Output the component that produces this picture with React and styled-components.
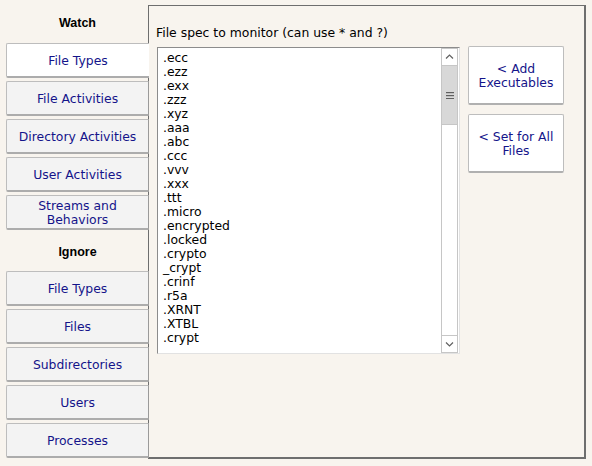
import styled, { createGlobalStyle } from "styled-components";

const GlobalStyle = createGlobalStyle`
  body {
    margin: 0;
    background: #f8f4ee;
    font-family: "DejaVu Sans", Verdana, sans-serif;
    font-size: 12.4px;
  }
`;

const Window = styled.div`
  display: flex;
  width: 592px;
  height: 466px;
  background: #f8f4ee;
`;

const Sidebar = styled.div`
  display: flex;
  flex-direction: column;
  width: 143px;
  margin-left: 6px;
  margin-right: -1px;
  position: relative;
  z-index: 1;
`;

const GroupTitle = styled.div`
  height: ${(props) => props.h}px;
  display: flex;
  align-items: center;
  justify-content: center;
  font-family: "Liberation Sans", Arial, sans-serif;
  font-weight: bold;
  font-size: 12.5px;
  color: #000;
  padding-top: ${(props) => props.pt || 0}px;
  box-sizing: border-box;
`;

const Tab = styled.div`
  box-sizing: border-box;
  height: 35px;
  margin-bottom: 3px;
  padding-top: 1px;
  display: flex;
  align-items: center;
  justify-content: center;
  text-align: center;
  line-height: 14px;
  color: #14148a;
  background: ${(props) => (props.active ? "#ffffff" : "#f3f3f3")};
  border: 1px solid #bdbdbd;
  border-bottom: 2px solid #acacac;
  border-right: ${(props) => (props.active ? "none" : "1px solid #9a9a9a")};
  border-radius: 2px 0 0 2px;
  cursor: pointer;
`;

const Panel = styled.div`
  box-sizing: border-box;
  margin-top: 5px;
  width: 438px;
  height: 454px;
  border: 1px solid #6e6e6e;
  border-right-width: 2px;
  border-bottom-width: 2px;
  padding: 19px 0 0 7px;
  display: flex;
  flex-direction: column;
`;

const Label = styled.div`
  color: #000;
  height: 15px;
  line-height: 15px;
  margin-bottom: 7px;
`;

const Row = styled.div`
  display: flex;
  gap: 8px;
`;

const ListBox = styled.div`
  box-sizing: border-box;
  width: 303px;
  height: 307px;
  margin-left: 1px;
  background: #fff;
  border: 1px solid #8c8c8c;
  border-right-color: #e2e2e2;
  border-bottom-color: #e2e2e2;
  display: flex;
`;

const Items = styled.div`
  flex: 1;
  padding: 3px 0 0 5px;
  color: #000;
  line-height: 14px;
`;

const Scroll = styled.div`
  box-sizing: border-box;
  width: 17px;
  margin: 0 1px 0 0;
  border: 1px solid #c6c6c6;
  display: flex;
  flex-direction: column;
  background: #fff;
`;

const Arrow = styled.div`
  height: 16px;
  display: flex;
  align-items: center;
  justify-content: center;
  border-bottom: ${(props) => (props.down ? "none" : "1px solid #c6c6c6")};
  border-top: ${(props) => (props.down ? "1px solid #c6c6c6" : "none")};
`;

const Thumb = styled.div`
  height: 58px;
  background: #d8d8d8;
  border-bottom: 1px solid #c6c6c6;
  display: flex;
  align-items: center;
  justify-content: center;
`;

const Track = styled.div`
  flex: 1;
`;

const Buttons = styled.div`
  display: flex;
  flex-direction: column;
  gap: 9px;
  margin-top: -1px;
`;

const Button = styled.div`
  box-sizing: border-box;
  width: 96px;
  height: 59px;
  background: #fff;
  border: 1px solid #bdbdbd;
  border-bottom: 2px solid #b0b0b0;
  border-radius: 2px;
  display: flex;
  align-items: center;
  justify-content: center;
  text-align: center;
  line-height: 14px;
  color: #14148a;
  padding: 2px 4px 0;
`;

const Chevron = ({ down }) => (
  <svg width="9" height="6" viewBox="0 0 9 6">
    <path
      d={down ? "M1 1.5 L4.5 5 L8 1.5" : "M1 4.5 L4.5 1 L8 4.5"}
      fill="none"
      stroke="#606060"
      strokeWidth="1.2"
    />
  </svg>
);

const Grip = () => (
  <svg width="8" height="7" viewBox="0 0 8 7">
    <rect x="0" y="0" width="8" height="1.2" fill="#606060" />
    <rect x="0" y="3" width="8" height="1.2" fill="#606060" />
    <rect x="0" y="6" width="8" height="1.2" fill="#606060" />
  </svg>
);

const watchTabs = [
  "File Types",
  "File Activities",
  "Directory Activities",
  "User Activities",
  "Streams and Behaviors",
];
const ignoreTabs = ["File Types", "Files", "Subdirectories", "Users", "Processes"];

const specs = [
  ".ecc", ".ezz", ".exx", ".zzz", ".xyz", ".aaa", ".abc", ".ccc", ".vvv",
  ".xxx", ".ttt", ".micro", ".encrypted", ".locked", ".crypto", "_crypt",
  ".crinf", ".r5a", ".XRNT", ".XTBL", ".crypt",
];

export default function App() {
  return (
    <>
      <GlobalStyle />
      <Window>
        <Sidebar>
          <GroupTitle h={43} pt={2}>Watch</GroupTitle>
          {watchTabs.map((t, i) => (
            <Tab key={t} active={i === 0}>
              {t === "Streams and Behaviors" ? (
                <span>
                  Streams and
                  <br />
                  Behaviors
                </span>
              ) : (
                t
              )}
            </Tab>
          ))}
          <GroupTitle h={38}>Ignore</GroupTitle>
          {ignoreTabs.map((t) => (
            <Tab key={t}>{t}</Tab>
          ))}
        </Sidebar>
        <Panel>
          <Label>File spec to monitor (can use * and ?)</Label>
          <Row>
            <ListBox>
              <Items>
                {specs.map((s) => (
                  <div key={s}>{s}</div>
                ))}
              </Items>
              <Scroll>
                <Arrow>
                  <Chevron />
                </Arrow>
                <Thumb>
                  <Grip />
                </Thumb>
                <Track />
                <Arrow down>
                  <Chevron down />
                </Arrow>
              </Scroll>
            </ListBox>
            <Buttons>
              <Button>
                &lt; Add
                <br />
                Executables
              </Button>
              <Button>
                &lt; Set for All
                <br />
                Files
              </Button>
            </Buttons>
          </Row>
        </Panel>
      </Window>
    </>
  );
}
